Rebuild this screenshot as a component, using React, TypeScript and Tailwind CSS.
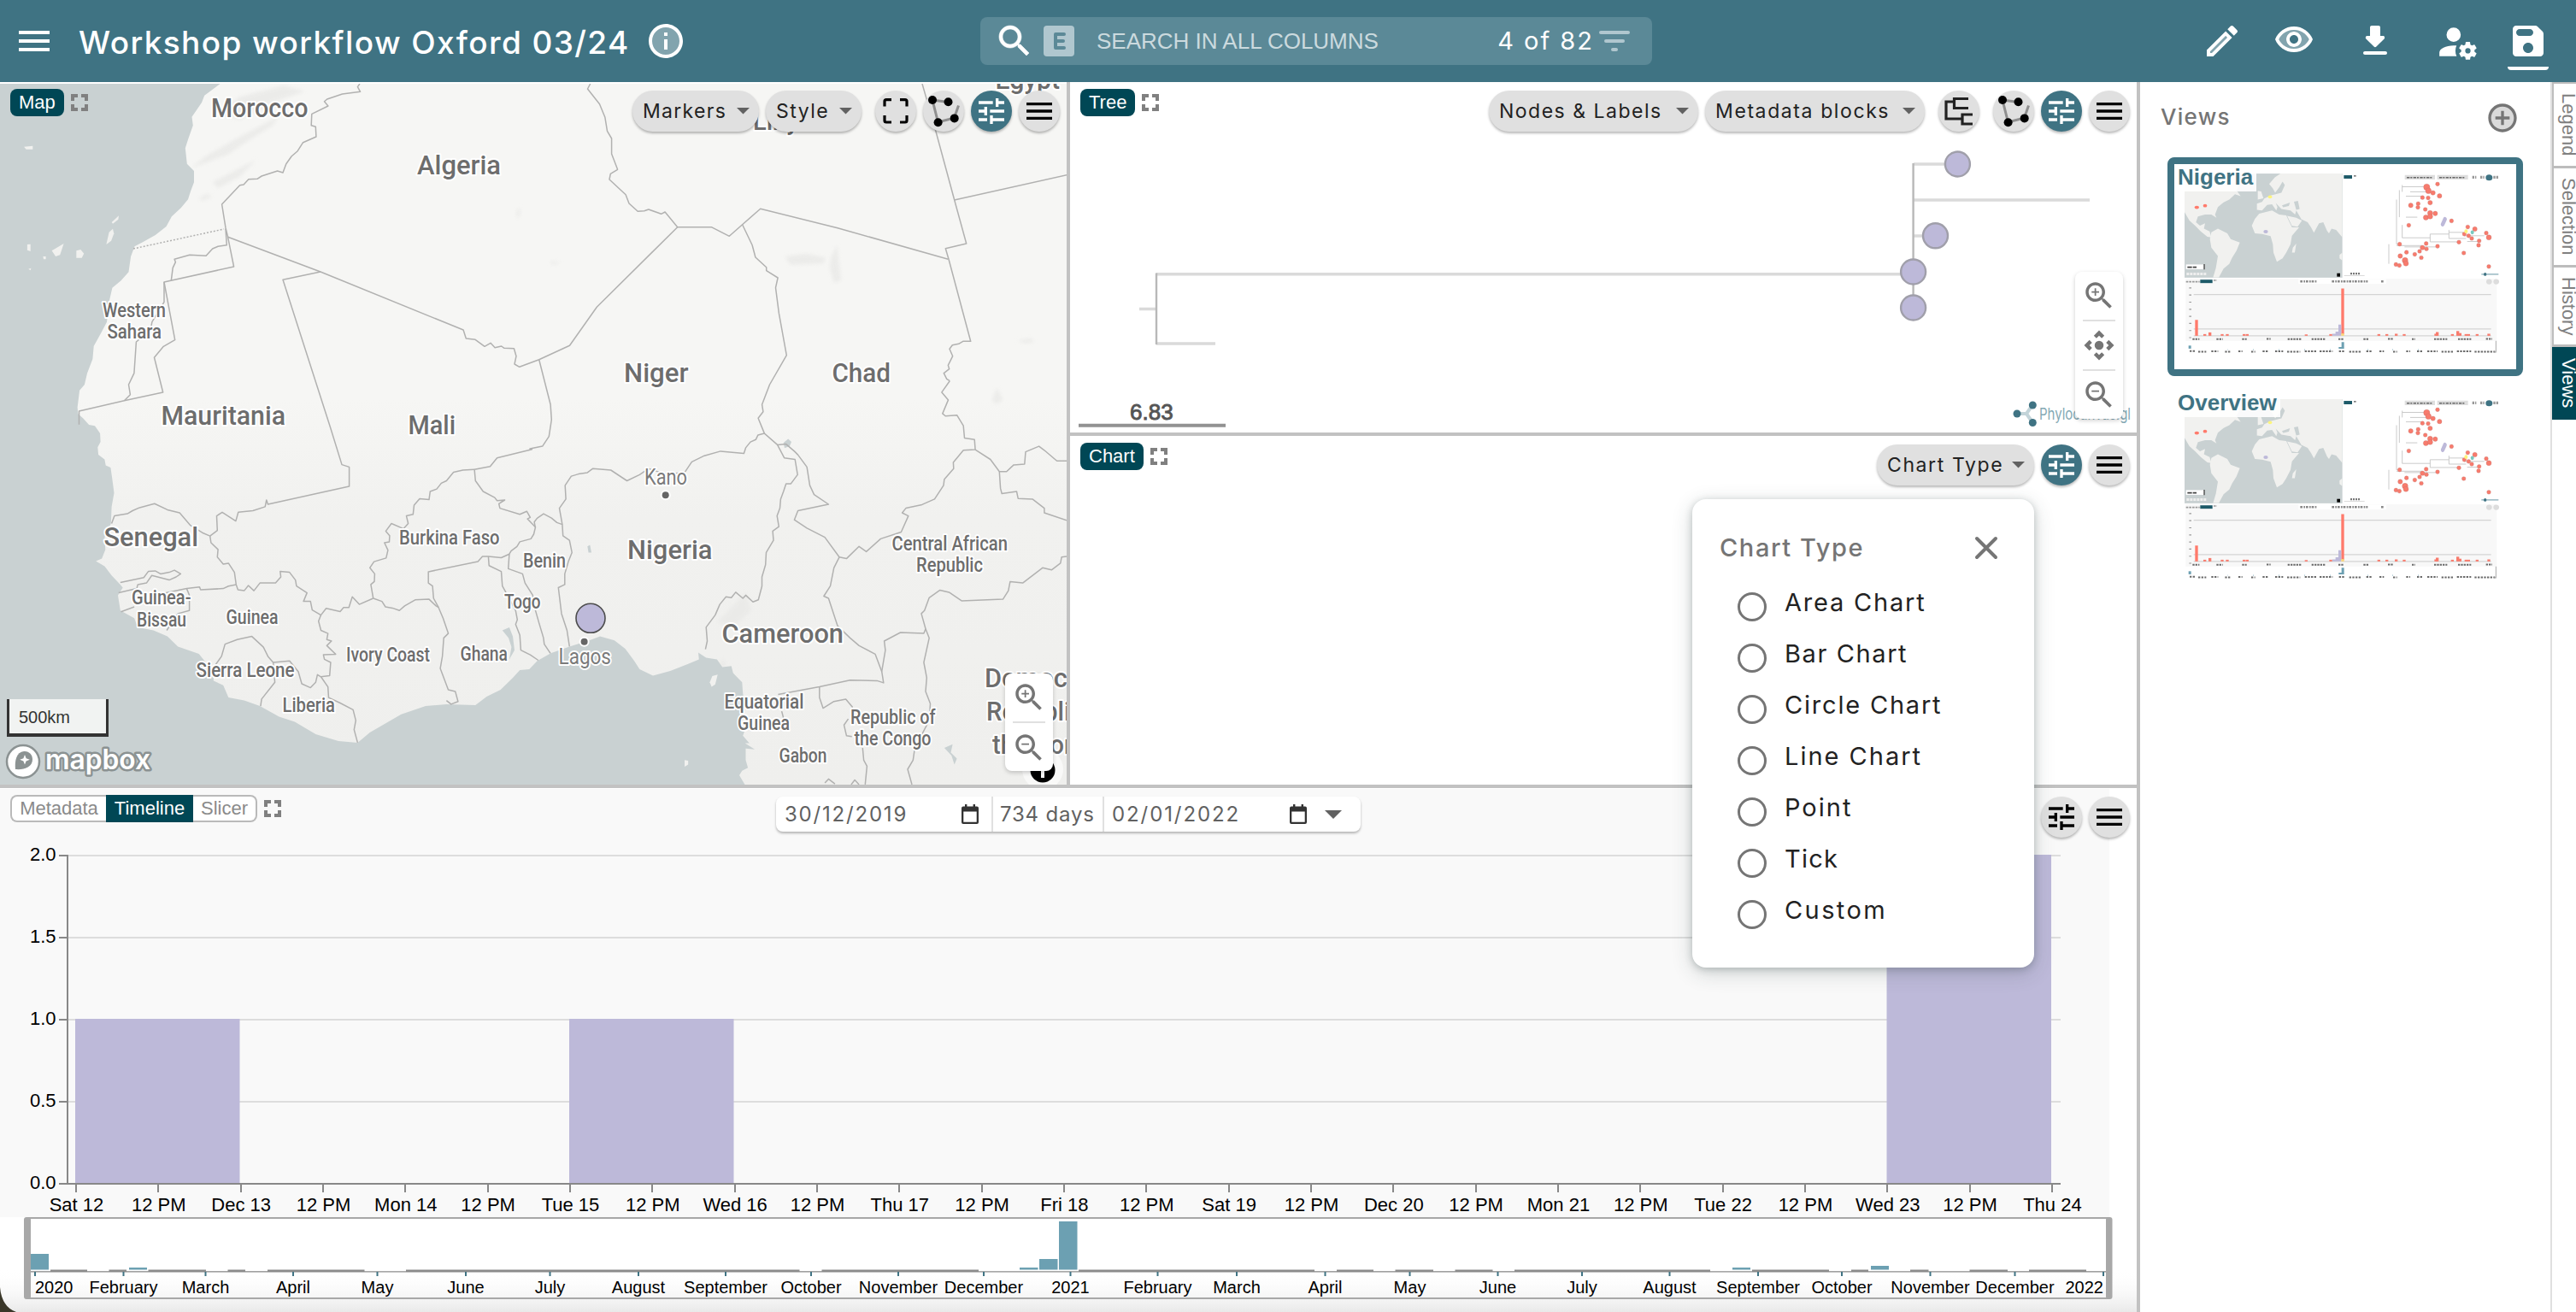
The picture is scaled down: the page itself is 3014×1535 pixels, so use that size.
import type { ReactNode } from "react";

const SANS = "font-['Inter','Open_Sans',sans-serif]";
const HELV = "font-['Liberation_Sans',Arial,sans-serif]";

/* ---------- icons ---------- */

function Icon({ size, className = "", children }: { size: number; className?: string; children: ReactNode }) {
  return (
    <svg width={size} height={size} viewBox="0 0 24 24" fill="currentColor" className={"shrink-0 block " + className}>
      {children}
    </svg>
  );
}

const MenuIcon = ({ size }: { size: number }) => (
  <Icon size={size}>
    <path d="M3 18h18v-2H3v2zm0-5h18v-2H3v2zm0-7v2h18V6H3z" />
  </Icon>
);

const InfoIcon = () => (
  <Icon size={48}>
    <circle cx="12" cy="12" r="9" opacity=".35" />
    <path d="M11 7h2v2h-2zm0 4h2v6h-2zm1-9C6.48 2 2 6.48 2 12s4.48 10 10 10 10-4.48 10-10S17.52 2 12 2zm0 18c-4.41 0-8-3.59-8-8s3.59-8 8-8 8 3.59 8 8-3.59 8-8 8z" />
  </Icon>
);

const SearchIcon = () => (
  <Icon size={48}>
    <path d="M15.5 14h-.79l-.28-.27C15.41 12.59 16 11.11 16 9.5 16 5.91 13.09 3 9.5 3S3 5.91 3 9.5 5.91 16 9.5 16c1.61 0 3.09-.59 4.23-1.57l.27.28v.79l5 4.99L20.49 19l-4.99-5zm-6 0C7.01 14 5 11.99 5 9.5S7.01 5 9.5 5 14 7.01 14 9.5 11.99 14 9.5 14z" stroke="currentColor" strokeWidth=".3" />
  </Icon>
);

const TuneIcon = () => (
  <svg width="40" height="40" viewBox="0 0 24 24" fill="none" stroke="currentColor" strokeWidth="2" strokeLinecap="butt" className="block">
    <path d="M3 6h10M17 6h4M3 12h6M11 12h10M3 18h6M13 18h8M16 3v6M8 9v6M12 15v6" />
  </svg>
);

const LassoIcon = () => (
  <svg width="48" height="48" viewBox="0 0 48 48" className="block">
    <path d="M41.5 17.5 36.5 32 17.5 37 11 11l18.5 2.5" fill="none" stroke="#8f8f8f" strokeWidth="3" />
    <g fill="#000">
      <circle cx="11" cy="11" r="5" />
      <circle cx="29.5" cy="13.3" r="5" />
      <circle cx="36.7" cy="32.4" r="5" />
      <circle cx="17.6" cy="37.3" r="5" />
    </g>
  </svg>
);

const FrameIcon = () => (
  <svg width="48" height="48" viewBox="0 0 48 48" fill="none" stroke="#000" strokeWidth="3.2" className="block">
    <path d="M19 10.6h-6a2 2 0 0 0-2 2v6M29 10.6h6a2 2 0 0 1 2 2v6M37 29v6a2 2 0 0 1-2 2h-6M11 29v6a2 2 0 0 0 2 2h6" />
  </svg>
);

const TreeIcon = () => (
  <svg width="48" height="48" viewBox="0 0 48 48" fill="none" stroke="#222" strokeWidth="3.2" className="block">
    <path d="M18.5 13H9v20h19M35 9.5H18.5v11H35M40 28H28v11h12" />
  </svg>
);

const ExpandIcon = () => (
  <svg width="20" height="20" viewBox="0 0 20 20" fill="none" stroke="#808080" strokeWidth="4" className="block shrink-0">
    <path d="M8 2H2v6M12 2h6v6M18 12v6h-6M2 12v6h6" />
  </svg>
);

const ZoomIcon = ({ plus }: { plus?: boolean }) => (
  <Icon size={42}>
    <path d="M15.5 14h-.79l-.28-.27C15.41 12.59 16 11.11 16 9.5 16 5.91 13.09 3 9.5 3S3 5.91 3 9.5 5.91 16 9.5 16c1.61 0 3.09-.59 4.23-1.57l.27.28v.79l5 4.99L20.49 19l-4.99-5zm-6 0C7.01 14 5 11.99 5 9.5S7.01 5 9.5 5 14 7.01 14 9.5 11.99 14 9.5 14z" />
    <path d={plus ? "M12 10h-2v2H9v-2H7V9h2V7h1v2h2v1z" : "M7 9h5v1H7z"} />
  </Icon>
);

const Caret = ({ w = 15 }: { w?: number }) => (
  <svg width={w} height={w / 2} viewBox="0 0 10 5" className="block shrink-0">
    <path d="M0 0h10L5 5z" fill="#616161" />
  </svg>
);

const CalendarIcon = () => (
  <svg width="20" height="23" viewBox="0 0 20 23" className="block shrink-0">
    <path d="M4 0h2.4v2.5h7.2V0H16v2.5h2a2 2 0 0 1 2 2V21a2 2 0 0 1-2 2H2a2 2 0 0 1-2-2V4.500a2 2 0 0 1 2-2h2zM2.300 8.500v12.200h15.400V8.500z" fill="#333" fillRule="evenodd" />
  </svg>
);

/* ---------- shared controls ---------- */

const SHADOW = "shadow-[0_2px_3px_rgba(0,0,0,0.28)]";

function Pill({ label, className }: { label: string; className: string }) {
  return (
    <div className={`flex h-12 items-center justify-between rounded-full bg-[#e0e0e0] pl-[12px] pr-[11px] text-[23px] text-[#222] whitespace-nowrap ${SHADOW} ${SANS} ${className}`}>
      <span className="pt-px">{label}</span>
      <Caret />
    </div>
  );
}

function Round({ active, className = "", children }: { active?: boolean; className?: string; children: ReactNode }) {
  return (
    <div className={`flex size-12 shrink-0 items-center justify-center rounded-full ${SHADOW} ${active ? "bg-[#3f7383] text-white" : "bg-[#e0e0e0] text-black"} ${className}`}>
      {children}
    </div>
  );
}

function Badge({ label }: { label: string }) {
  return (
    <div className="absolute left-3 top-2 flex items-center gap-2">
      <div className={`flex h-8 items-center rounded-lg bg-[#004755] px-[10px] text-[22px] leading-none text-white ${HELV}`}>{label}</div>
      <ExpandIcon />
    </div>
  );
}

/* ---------- map ---------- */

type Sheet = [number, number, number, number];
const NW: Sheet = [0, 0, 1.568, 3];
const SW: Sheet = [0, 400, 2.45, 2.8];
const SE: Sheet = [620, 400, 2.3758, 2.8];
const NE: Sheet = [980, 150, 3, 3];

const place = ([ox, oy, sx, sy]: Sheet, pts: string) =>
  pts
    .split(" ")
    .map((p) => {
      const [x, y] = p.split(",").map(Number);
      return `${(ox + x / sx).toFixed(1)},${(oy + y / sy).toFixed(1)}`;
    })
    .join(" ");

const OCEAN = [
  place(NW, "408,288 375,335 370,360 352,410 354,440 345,490 340,520 343,575 356,600 356,640 350,670 345,700 332,730 315,760 305,795 285,825 262,850 247,865 240,900 236,955 222,985 206,1010 200,1060 196,1130 185,1170 172,1215 170,1260 160,1310 155,1350 146,1370 142,1430"),
  place(SW, "224,236 238,250 255,272 272,275 287,300 288,328 280,345 282,370 300,385 303,405 317,412 322,450 327,495 320,540 318,595 300,640 302,680 292,710 275,718 300,735 320,765 345,795 352,805 338,830 345,880 385,905 395,935 440,945 480,965 510,998 570,1022 590,1050 612,1085 612,1110 640,1125 655,1165 700,1175 745,1193 800,1228 845,1245 905,1285 970,1308 1025,1313 1060,1280 1150,1220 1220,1193 1280,1187 1363,1190 1395,1162 1435,1140 1470,1100 1490,1075 1517,1072 1540,1045"),
  place(SE, "58,1020 110,998 165,978 195,965 235,978 265,1005 290,1045 305,1072 342,1093 390,1078 440,1055 470,1040 468,1018 490,1035 520,1040 535,1065 560,1062 565,1085 590,1115 592,1150 597,1200 590,1240 600,1265 592,1290 610,1315 598,1315 625,1335 600,1332 600,1370 606,1395 590,1405 582,1420 600,1455"),
  "0,925 0,90",
].join(" ");

const ISLANDS = [
  place(NW, "44,515 60,512 60,524 48,524"),
  place(NW, "205,780 218,757 217,770 207,785"),
  place(NW, "196,850 200,815 207,803 209,820 204,845 195,858"),
  place(NW, "50,858 56,857 56,882 50,878"),
  place(NW, "95,880 117,855 110,895 102,900"),
  place(NW, "140,880 148,876 154,890 150,905 140,905"),
  place(NW, "79,900 84,900 84,910 80,910"),
  place(NW, "52,944 57,941 56,949"),
  place(SE, "507,1095 522,1090 515,1122 505,1130 500,1115"),
  place(SE, "430,1370 440,1372 440,1385 430,1392"),
];

const LAKES = [
  place(SE, "705,330 718,318 727,328 722,342 708,348"),
  place(SE, "160,670 167,665 171,690 163,690"),
  place(SE, "1152,1330 1175,1318 1170,1345 1187,1365 1180,1385 1172,1355"),
  place(SW, "1440,945 1460,935 1470,965 1475,1010 1460,1040 1466,1000 1458,970"),
];

const RELIEF = [
  place(NW, "350,590 380,545 440,480 500,420 520,380 500,440 450,500 420,540 380,570"),
  place(NW, "390,640 430,600 470,560 440,620 400,660"),
  place(NW, "400,400 440,340 520,300 560,320 500,360 440,420"),
  place(NW, "365,695 380,680 390,690 370,705"),
  place(NW, "1440,900 1480,890 1515,905 1510,925 1450,930"),
  place(NW, "1525,900 1536,860 1538,900 1543,985 1530,992 1522,940"),
  place(NW, "948,740 954,725 954,760 948,765"),
  place(NW, "1010,915 1030,922 1012,930"),
  place(NE, "630,745 680,738 690,750 660,755"),
  place(SE, "560,870 600,820 615,880 570,930 520,920"),
  place(SE, "525,1055 538,1038 545,1060 532,1070"),
  place(SE, "1285,190 1298,150 1315,190 1295,205"),
];

const BORDERS = [
  place(NW, "660,294 656,305 661,322 628,330 600,348 595,356 602,372 572,400 571,440 579,445 580,480 556,500 546,530 535,548 525,575 519,606 509,600 480,618 472,628 456,629 447,648 440,650 407,717 414,800 418,832 429,936 301,990 321,1193 300,1216 283,1255 299,1377 228,1406 145,1443 145,1490"),
  place(NW, "414,803 416,860 400,865 390,873 378,898 348,895 320,910 322,920 317,940 314,985"),
  place(NW, "301,990 301,1060 279,1130 276,1160 250,1200 246,1310 236,1350 239,1385 228,1406"),
  place(NW, "418,832 588,954 850,1158 855,1188 872,1192 889,1216 900,1204 908,1220 920,1215 925,1222 943,1223 947,1250 944,1278 953,1288 989,1262 1045,1213 1095,1078 1243,797"),
  place(NW, "588,954 519,982 606,1500") + " " + place(SW, "980,402 1001,410 1001,473 768,532 764,518 760,540 725,553 683,558 676,587 637,558 621,570 623,618 602,636"),
  place(NW, "1083,294 1078,312 1100,365 1110,412 1114,460 1122,486 1122,540 1133,595 1120,610 1118,630 1148,683 1154,714 1170,742 1182,740 1190,735 1213,751 1220,744 1243,797 1305,797 1338,829 1362,788 1395,733") + " " + place(NE, "0,350 388,460"),
  "1079,98 " + place(NE, "344,8 410,252 452,405 379,422 390,460 467,748 440,748 425,757 403,761 393,775 404,800 388,832 392,845 373,860 383,880 394,887"),
  place(NE, "410,252 805,164"),
  place(NW, "1362,788 1380,860 1386,903 1406,938 1406,950 1427,975 1423,1010 1429,1100 1443,1247 1412,1350 1398,1420 1400,1445 1391,1468") + " " + place(SE, "652,300"),
  place(NW, "989,1262 1010,1420") + " " + place(SE, "60,255 53,310 35,342 0,350") + " " + place(SW, "1525,352 1425,380 1405,408 1360,418"),
  place(SW, "1360,418 1327,420 1300,427 1280,455 1265,463 1252,482 1233,490 1230,517 1203,514 1187,535 1184,565 1165,570 1170,595 1157,612 1122,595 1106,620 1117,635 1116,655 1102,658 1112,682 1107,708 1072,720 1060,740 1074,760 1073,785 1063,795 1070,840"),
  place(SW, "1360,418 1363,455 1385,490 1418,510 1425,520 1447,518 1430,530 1433,545 1490,565 1510,555 1520,575 1512,580 1535,607 1530,630 1522,645 1490,655 1482,670 1465,685 1460,695 1437,707 1400,703 1383,703 1370,720 1228,753 1228,790 1240,800 1243,840 1257,870"),
  place(SW, "1070,840 1095,850 1105,868 1125,872 1145,880 1160,865 1190,845 1230,843 1250,865 1257,870 1270,905 1285,955 1272,970 1268,1030 1262,1070 1285,1140 1305,1145 1313,1178 1293,1187 1280,1175"),
  place(SW, "1400,703 1402,733 1437,752 1440,800 1450,820 1478,880 1483,910 1478,925 1490,960 1493,1010 1520,1025 1543,1043"),
  place(SW, "1460,695 1457,743 1498,760 1505,790 1527,830 1530,860 1545,920 1558,970") + " " + place(SE, "40,990 57,1020"),
  place(SE, "15,607 12,590 20,578 38,563 60,577 75,592 90,598 92,635 110,650 117,690 107,720 97,760 97,795 79,805 88,890 103,945 110,998"),
  place(SE, "90,598 82,545 100,515 98,470 115,440 135,433 160,428 175,415 225,420 270,455 305,435 330,415 375,433 430,428 450,393 485,373 530,358 595,365 600,347 613,328 628,320 634,305 652,300 688,337 707,380 737,385 744,435 725,465 712,465 705,490 697,515 695,545 687,570 692,605 675,620 677,650 657,690 655,730 645,770 645,800 635,845 620,852 600,830 592,840 572,820 560,838 545,835 528,860 515,895 490,935 493,980 488,1007"),
  place(SE, "688,337 712,335 735,358 745,370 770,410 778,470 790,500 830,532 745,553 735,583 770,610 820,640 860,705 880,710 915,670 935,687 975,645 1032,623 1052,570 1035,560 1045,545 1090,533 1125,515 1150,470 1152,450 1178,415 1177,395 1205,355 1238,353 1236,320 1208,315 1205,275 1187,240 1155,243 1147,235 1163,190 1145,165 1167,128"),
  place(SE, "1238,353 1280,385 1305,425 1308,480 1312,497 1353,490 1357,513 1397,515 1430,545 1430,560 1492,585"),
  place(SE, "1305,425 1325,425 1345,403 1375,400 1378,360 1415,342 1430,355 1465,390 1492,390"),
  place(SE, "860,705 845,740 835,800 817,833 830,840 855,930 890,970 915,995 960,1023 978,1080 983,1117 965,1110 890,1108 805,1130 690,1155"),
  place(SE, "978,1080 988,1010 985,980 1030,952 1095,955 1100,940 1088,890 1097,880 1110,838 1140,813 1165,820 1200,848 1315,843 1330,815 1335,785 1370,790 1425,740 1450,747 1475,725 1478,705 1492,703"),
  place(SE, "1100,940 1110,970 1095,1050 1103,1100 1100,1145 1113,1185 1110,1240 1070,1330 1065,1370 1050,1400 1062,1450"),
  place(SE, "805,1130 805,1165 815,1200 845,1178 878,1170 897,1197"),
  place(SE, "885,1235 873,1255 880,1290 895,1293"),
  place(SE, "925,1330 928,1370 937,1390 932,1450"),
  place(SE, "700,1210 705,1232"),
  place(SE, "820,1445 830,1432 848,1448"),
  place(SE, "893,1450 903,1435 915,1450"),
  place(SW, "320,595 328,570 365,563 380,553 400,543 443,530 480,550 515,560 545,600 580,625 602,636 605,658 625,680 623,705 640,728 655,725 672,755 677,795 682,812 700,815 712,798 728,815 745,790 790,790 805,770 803,752 830,755 847,780 850,800 880,822 870,850 890,850 895,878 920,895 935,873 975,883 985,870 1000,870 1010,835 1030,860 1070,840"),
  place(SW, "345,788 412,772 425,752 445,750 460,760 485,755 500,748 518,760 505,770 485,780 435,765 420,790 395,795 392,808 340,822"),
  place(SW, "465,825 535,808 572,803 575,812 640,808 655,800 677,795"),
  place(SW, "535,808 543,830 543,880 510,890 478,945"),
  place(SW, "347,884 385,868"),
  place(SW, "610,1070 635,1030 645,990 680,975 722,965 755,1000 768,1030 783,1050 788,1115 750,1170 747,1193"),
  place(SW, "783,1050 830,1045 855,1080 865,1120 890,1133 905,1115 910,1090 920,1097 940,1130 942,1165 975,1183 1012,1205 1020,1240 1015,1270 1025,1313"),
  place(SW, "920,895 913,915 920,945 940,955 937,975 950,980 937,995 962,1023 927,1025 930,1040 948,1050 945,1093 920,1097"),
];

const COUNTRY_LABELS: [string, number, number, number, number][] = [
  ["Morocco", 247, 360.5, 136.5, 31],
  ["Algeria", 488, 586, 204, 31],
  ["Libya", 881, 950, 152, 31],
  ["Egypt", 1164.5, 1240, 104, 31],
  ["Niger", 730, 805.5, 446.5, 31],
  ["Chad", 973.5, 1042, 447, 31],
  ["Mauritania", 188.5, 334, 497, 31],
  ["Mali", 477.5, 533, 508, 31],
  ["Senegal", 121.5, 232, 639, 31],
  ["Nigeria", 734, 833.5, 653.5, 31],
  ["Cameroon", 844.5, 987, 752, 31],
  ["Democratic", 1152, 1310, 803.5, 31],
  ["Republic of", 1154, 1302, 843, 31],
  ["the Congo", 1161, 1294, 882, 31],
  ["Western", 120, 194, 371, 24],
  ["Sahara", 125.5, 189, 396, 24],
  ["Burkina Faso", 467, 584.5, 637, 24],
  ["Guinea-", 154, 223.500, 707, 24],
  ["Bissau", 160, 218, 733, 24],
  ["Guinea", 264.5, 325.5, 730, 24],
  ["Sierra Leone", 229.5, 344.5, 792, 24],
  ["Ivory Coast", 405, 503, 773.5, 24],
  ["Ghana", 538.5, 594, 773, 24],
  ["Liberia", 330.5, 392, 833, 24],
  ["Togo", 590, 632.5, 712, 24],
  ["Benin", 612, 662, 663.5, 24],
  ["Central African", 1043.500, 1179, 644, 24],
  ["Republic", 1072, 1150, 669, 24],
  ["Equatorial", 847.5, 940.5, 828.5, 24],
  ["Guinea", 863, 924, 853.5, 24],
  ["Republic of", 995, 1094.5, 846.5, 24],
  ["the Congo", 999.5, 1089.500, 872, 24],
  ["Gabon", 911.5, 967.5, 891.5, 24],
];

const CITY_LABELS: [string, number, number, number][] = [
  ["Kano", 754, 804, 567],
  ["Lagos", 653.5, 715, 777],
];

function MapPanel() {
  return (
    <div className="relative h-[822px] w-[1248px] shrink-0 overflow-hidden border-t-2 border-white bg-[#f6f6f4]">
      <svg width="1248" height="820" viewBox="0 98 1248 820" className="block font-['Roboto',sans-serif]">
        <defs>
          <linearGradient id="land" x1="0" y1="0" x2="0" y2="1">
            <stop offset="0" stopColor="#f6f6f4" />
            <stop offset=".45" stopColor="#f6f6f4" />
            <stop offset=".62" stopColor="#f1f1ef" />
            <stop offset="1" stopColor="#efefed" />
          </linearGradient>
          <filter id="soft">
            <feGaussianBlur stdDeviation="2" />
          </filter>
        </defs>
        <rect y="96" width="1248" height="822" fill="url(#land)" />
        <g fill="#e9e9e7" filter="url(#soft)" opacity=".8">
          {RELIEF.map((p, i) => (
            <polygon key={i} points={p} />
          ))}
        </g>
        <polygon points={OCEAN} fill="#c9d1d2" />
        {ISLANDS.map((p, i) => (
          <polygon key={i} points={p} fill="#f1f1ef" />
        ))}
        {LAKES.map((p, i) => (
          <polygon key={i} points={p} fill="#c9d1d2" />
        ))}
        <g fill="none" stroke="#b1b1b0" strokeWidth="1.500" strokeLinejoin="round">
          {BORDERS.map((p, i) => (
            <polyline key={i} points={p} />
          ))}
          <polyline points="156,291 262,268" strokeDasharray="2 2" />
        </g>
        <g stroke="#fff" strokeWidth="4" strokeLinejoin="round" paintOrder="stroke">
          {COUNTRY_LABELS.map(([t, x0, x1, y, s], i) => (
            <text key={i} x={x0} y={y} fontSize={s} textLength={x1 - x0} lengthAdjust="spacingAndGlyphs" fontWeight="500" fill="#6d6d6d">
              {t}
            </text>
          ))}
          {CITY_LABELS.map(([t, x0, x1, y]) => (
            <text key={t} x={x0} y={y} fontSize="25" textLength={x1 - x0} lengthAdjust="spacingAndGlyphs" fill="#7b7b7b">
              {t}
            </text>
          ))}
          <circle cx="778.7" cy="579.3" r="4" fill="#666" />
          <circle cx="683.6" cy="750.7" r="4" fill="#666" />
        </g>
        <circle cx="691" cy="723.3" r="17" fill="#bdb9d9" stroke="#4d4d4d" strokeWidth="1.600" />
        <g>
          <circle cx="27" cy="891" r="19" fill="#fff" stroke="#8b9292" strokeWidth="2.500" />
          <path d="M18 900c-1-10 1-20 10-21 6-.5 10 4 10 9.500 0 9-10 12.500-20 11.500z" fill="#8b9292" />
          <path d="M29 883l1.600 4.200 4.200 1.600-4.200 1.600L29 894.600l-1.600-4.200-4.200-1.600 4.200-1.600z" fill="#fff" />
          <text x="53" y="900" fontSize="32" fontWeight="600" textLength="123" lengthAdjust="spacingAndGlyphs" fill="#fff" stroke="#8b9292" strokeWidth="5" strokeLinejoin="round" paintOrder="stroke" className="font-['Inter',sans-serif]">
            mapbox
          </text>
        </g>
        <circle cx="1220" cy="900" r="24" fill="#fff" opacity=".6" />
        <circle cx="1220" cy="901" r="14.500" fill="#000" />
        <path d="M1220 899v11" stroke="#fff" strokeWidth="4" />
      </svg>
      <div className={`absolute left-2 top-[720px] flex h-11 w-[119px] items-center border-x-[3px] border-b-4 border-[#333] bg-[#f1f3f2] pl-[11px] pt-px text-[20px] leading-none text-[#333] ${HELV}`}>500km</div>
      <div className="absolute -top-0.5 left-0">
        <Badge label="Map" />
      </div>
      <div className="absolute right-2 top-2 flex gap-2">
        <Pill label="Markers" className="w-[148px] tracking-[1.3px]" />
        <Pill label="Style" className="mr-2 w-[112px] tracking-[1.5px]" />
        <Round>
          <FrameIcon />
        </Round>
        <Round>
          <LassoIcon />
        </Round>
        <Round active>
          <TuneIcon />
        </Round>
        <Round>
          <MenuIcon size={40} />
        </Round>
      </div>
      <div className="absolute right-4 top-[690px] flex h-[114px] w-14 flex-col items-center rounded-lg bg-white pt-[7px] text-[#757575] shadow-[0_2px_5px_rgba(0,0,0,0.2)]">
        <ZoomIcon plus />
        <div className="mb-2 mt-[7px] h-0.5 w-[38px] bg-[#e0e0e0]" />
        <ZoomIcon />
      </div>
    </div>
  );
}

/* ---------- tree ---------- */

function TreePanel() {
  return (
    <div className="relative h-[410px] overflow-hidden bg-white">
      <svg width="1248" height="410" viewBox="1252 96 1248 410" className={`block ${HELV}`}>
        <g fill="none" stroke="#dadada" strokeWidth="3.600">
          <path d="M1333 361.500h20M1353 320.700h885M1353 402h69M2239 192h40M2239 234h206M2239 276h20" />
          <path d="M1353 319.500v83.500M2238.600 191v168" stroke="#b8b8b8" strokeWidth="2.400" />
        </g>
        <g fill="#bdb9d9" stroke="#a09faa" strokeWidth="2.400">
          <circle cx="2290.400" cy="192" r="14.500" />
          <circle cx="2264.500" cy="275.800" r="14.500" />
          <circle cx="2238.600" cy="318" r="14.500" />
          <circle cx="2238.600" cy="360" r="14.500" />
        </g>
        <text x="1322" y="491" fontSize="26" fill="#555" stroke="#555" strokeWidth=".9">6.83</text>
        <path d="M1262 497.800h172" stroke="#929292" strokeWidth="4" />
        <path d="M2360 484h11l7-10M2371 484l7 10" stroke="#c3d4d9" strokeWidth="4" fill="none" />
        <g fill="#3f7383">
          <circle cx="2360" cy="484" r="4.500" />
          <circle cx="2378.300" cy="474" r="4.500" />
          <circle cx="2378.300" cy="494.500" r="4.500" />
        </g>
        <text x="2386" y="491" fontSize="19" textLength="107" lengthAdjust="spacingAndGlyphs" fill="#84a9b4" className="font-['Inter',sans-serif]">
          Phylocanvas.gl
        </text>
      </svg>
      <Badge label="Tree" />
      <div className="absolute right-2 top-[10px] flex gap-2">
        <Pill label="Nodes & Labels" className="w-[245px] tracking-[1.5px]" />
        <Pill label="Metadata blocks" className="mr-2 w-[257px] tracking-[1.6px]" />
        <Round className="mr-2">
          <TreeIcon />
        </Round>
        <Round>
          <LassoIcon />
        </Round>
        <Round active>
          <TuneIcon />
        </Round>
        <Round>
          <MenuIcon size={40} />
        </Round>
      </div>
      <div className="absolute right-4 top-[222px] flex h-[172px] w-14 flex-col items-center rounded-lg bg-white pt-[7px] text-[#757575] shadow-[0_2px_5px_rgba(0,0,0,0.2)]">
        <ZoomIcon plus />
        <div className="mt-[7px] h-0.5 w-[38px] bg-[#e0e0e0]" />
        <svg width="42" height="42" viewBox="0 0 24 24" fill="currentColor" className="my-[7px] block">
          <path d="M5.540 8.460 2 12l3.540 3.540 1.760-1.770L5.540 12l1.760-1.770zM18.460 15.540 22 12l-3.540-3.540-1.760 1.770L18.460 12l-1.760 1.770zM8.460 18.460 12 22l3.540-3.540-1.770-1.760L12 18.460l-1.770-1.760zM15.540 5.540 12 2 8.460 5.540l1.770 1.760L12 5.540l1.770 1.760z" />
          <circle cx="12" cy="12" r="3" />
        </svg>
        <div className="mb-[7px] h-0.5 w-[38px] bg-[#e0e0e0]" />
        <ZoomIcon />
      </div>
    </div>
  );
}

/* ---------- chart ---------- */

const CHART_TYPES: [string, string][] = [
  ["Area Chart", "tracking-[1.8px]"],
  ["Bar Chart", "tracking-[1.6px]"],
  ["Circle Chart", "tracking-[1.8px]"],
  ["Line Chart", "tracking-[2px]"],
  ["Point", "tracking-[2px]"],
  ["Tick", "tracking-[1.2px]"],
  ["Custom", "tracking-[2.4px]"],
];

function ChartPanel() {
  return (
    <div className="relative h-[408px] bg-white">
      <Badge label="Chart" />
      <div className="absolute right-2 top-[10px] flex gap-2">
        <Pill label="Chart Type" className="w-[184px] tracking-[1.6px]" />
        <Round active>
          <TuneIcon />
        </Round>
        <Round>
          <MenuIcon size={40} />
        </Round>
      </div>
      <div className={`absolute right-[120px] top-[74px] z-10 h-[548px] w-[400px] rounded-2xl bg-white shadow-[0_6px_24px_rgba(40,60,60,0.2),0_2px_8px_rgba(40,60,60,0.25)] ${SANS}`}>
        <div className="flex items-center justify-between pl-8 pr-[42px] pt-9 text-[29px] leading-10 text-[#757575]">
          <span className="pt-px font-medium tracking-[1.6px]">Chart Type</span>
          <svg width="28" height="28" viewBox="0 0 28 28" stroke="#757575" strokeWidth="4" strokeLinecap="round" className="block">
            <path d="M3 3l22 22M25 3L3 25" />
          </svg>
        </div>
        <ul className="mt-[15px]">
          {CHART_TYPES.map(([t, tr]) => (
            <li key={t} className="flex h-[60px] items-center pl-[53px] text-[29px] leading-[60px] text-[#222]">
              <span className="mt-2 block size-[34px] rounded-full border-[3.500px] border-[#757575]" />
              <span className={`-mt-0.5 ml-[21px] ${tr}`}>{t}</span>
            </li>
          ))}
        </ul>
      </div>
    </div>
  );
}

/* ---------- timeline ---------- */

const DAY_TICKS = ["Sat 12", "12 PM", "Dec 13", "12 PM", "Mon 14", "12 PM", "Tue 15", "12 PM", "Wed 16", "12 PM", "Thu 17", "12 PM", "Fri 18", "12 PM", "Sat 19", "12 PM", "Dec 20", "12 PM", "Mon 21", "12 PM", "Tue 22", "12 PM", "Wed 23", "12 PM", "Thu 24"];

const MONTH_TICKS: [string, number][] = [
  ["February", 144.5], ["March", 240.5], ["April", 343], ["May", 441.5], ["June", 545], ["July", 643.5], ["August", 747], ["September", 849], ["October", 949], ["November", 1051], ["December", 1151], ["2021", 1252.5],
  ["February", 1354.5], ["March", 1447], ["April", 1550.5], ["May", 1649.5], ["June", 1752.5], ["July", 1851], ["August", 1953.5], ["September", 2057], ["October", 2155], ["November", 2258.5], ["December", 2357.5],
];

const GAPS: [number, number][] = [[36, 59], [102, 127.5], [148, 173.5], [241, 266.5], [287, 313], [426.5, 475], [935.5, 961.5], [1145, 1262], [1538, 1564], [1607, 1632.5], [1677, 1702.5], [1746.5, 1772], [2001, 2050], [2140, 2166], [2186, 2235], [2256.5, 2304.5], [2349, 2374], [2441, 2464]];

const BRUSH_BARS: [number, number, number][] = [
  [36, 21, 1467], [151, 21, 1483], [1193, 21.5, 1483], [1216, 21.5, 1473], [1239, 21.500, 1429], [2027, 21, 1483], [2189, 21, 1481],
];

function TimelinePanel() {
  return (
    <div className="relative h-[613px] bg-white">
      <svg width="2500" height="613" viewBox="0 922 2500 613" className={`block ${HELV}`}>
        <defs>
          <linearGradient id="fade" x1="0" y1="0" x2="0" y2="1">
            <stop offset="0" stopColor="#fff" stopOpacity="0" />
            <stop offset="1" stopColor="#e9e9e9" />
          </linearGradient>
        </defs>
        <rect y="923" width="2468" height="501" fill="#f9f9f9" />
        {[1001, 1097, 1193, 1289].map((y) => (
          <path key={y} d={`M80 ${y}H2411`} stroke="#dddddd" strokeWidth="2" />
        ))}
        <g fill="#bdb9d9">
          <rect x="88" y="1192" width="192.500" height="192" />
          <rect x="666" y="1192" width="192.500" height="192" />
          <rect x="2207.500" y="1000" width="192.500" height="384" />
        </g>
        <path d="M79 1000V1386M79 1385H2411" stroke="#888" strokeWidth="2" fill="none" />
        {["2.0", "1.5", "1.0", "0.5", "0.0"].map((t, i) => (
          <g key={t}>
            <path d={`M69 ${1001 + i * 96}h10`} stroke="#888" strokeWidth="2" />
            <text x="65.500" y={1007 + i * 96} textAnchor="end" fontSize="22">
              {t}
            </text>
          </g>
        ))}
        {DAY_TICKS.map((t, i) => (
          <g key={i}>
            <path d={`M${Math.round(89 + i * 96.33)} 1386v9`} stroke="#888" strokeWidth="2" />
            <text x={89.5 + i * 96.33} y="1417" textAnchor="middle" fontSize="22">
              {t}
            </text>
          </g>
        ))}
        <rect y="1424" width="2500" height="111" fill="#fff" />
        <rect y="1485" width="2500" height="50" fill="url(#fade)" />
        <path d="M36 1487H2464" stroke="#8b8b8b" strokeWidth="3" />
        {GAPS.map(([a, b]) => (
          <path key={a} d={`M${a} 1486H${b}`} stroke="#fff" strokeWidth="2.400" />
        ))}
        <g fill="#6ca0b2">
          {BRUSH_BARS.map(([x, w, y]) => (
            <rect key={x} x={x} y={y} width={w} height={1485.500 - y} />
          ))}
        </g>
        <path d="M41 1488v5M2461 1488v5" stroke="#3f7383" strokeWidth="2" />
        <text x="41" y="1513" fontSize="20">
          2020
        </text>
        <text x="2461" y="1513" fontSize="20" textAnchor="end">
          2022
        </text>
        {MONTH_TICKS.map(([t, x]) => (
          <g key={x}>
            <path d={`M${x} 1488v5`} stroke="#3f7383" strokeWidth="2" />
            <text x={x} y="1513" fontSize="20" textAnchor="middle">
              {t}
            </text>
          </g>
        ))}
        <path d="M32 1425H2468M32 1519H2468" stroke="#a8a8a8" strokeWidth="2" />
        <rect x="28" y="1424" width="8" height="96" rx="3" fill="#a8a8a8" />
        <rect x="2464" y="1424" width="7.500" height="96" rx="3" fill="#a8a8a8" />
        <path d="M0 1506q2 23 19 29H0z" fill="#3a3729" />
      </svg>
      <div className={`absolute left-3 top-2 flex items-center text-[22px] leading-none ${HELV}`}>
        <div className="flex h-8 w-[112px] items-center justify-center rounded-l-lg border-2 border-r-0 border-[#bababa] bg-white text-[#8a8a8a]">Metadata</div>
        <div className="flex h-8 w-[102px] items-center justify-center bg-[#004755] text-white">Timeline</div>
        <div className="mr-2 flex h-8 w-[75px] items-center justify-center rounded-r-lg border-2 border-l-0 border-[#bababa] bg-white text-[#8a8a8a]">Slicer</div>
        <ExpandIcon />
      </div>
      <div className={`absolute left-[908px] top-[10px] flex h-[41px] w-[684px] items-center rounded-lg bg-white text-[24px] text-[#616161] shadow-[0_2px_3px_rgba(0,0,0,0.28)] whitespace-nowrap ${SANS}`}>
        <div className="flex h-full w-[254px] items-center justify-between border-r-2 border-[#e0e0e0] pl-[10px] pr-[15px]">
          <span className="tracking-[1.8px]">30/12/2019</span>
          <CalendarIcon />
        </div>
        <div className="flex h-full w-[130px] items-center border-r-2 border-[#e0e0e0] pl-2 tracking-[0.8px]">734 days</div>
        <div className="flex h-full grow items-center justify-between pl-[9px] pr-[22px]">
          <span className="mr-auto tracking-[1.9px]">02/01/2022</span>
          <CalendarIcon />
          <span className="ml-[21px]">
            <Caret w={20} />
          </span>
        </div>
      </div>
      <div className="absolute right-2 top-[10px] flex gap-2">
        <Round>
          <TuneIcon />
        </Round>
        <Round>
          <MenuIcon size={40} />
        </Round>
      </div>
    </div>
  );
}

/* ---------- saved views ---------- */

const RED_DOTS: [number, number, number?][] = [
  [1056, 342], [1018, 351, 11], [1024, 362, 10], [1040, 368, 8], [1063, 377, 8], [1003, 382], [1023, 383], [1030, 397, 8], [962, 405, 8], [988, 400], [987, 411], [1013, 417, 7], [1030, 428, 9], [1048, 429, 8], [1015, 441, 9], [1030, 438, 9], [955, 464], [1105, 451, 7], [1162, 469, 7], [1187, 475, 8], [1150, 490], [1165, 495], [1176, 503], [1227, 487], [1236, 500, 9], [1202, 510], [1200, 523], [1131, 514], [1148, 546], [923, 520], [1016, 518], [1003, 530, 8], [1017, 534, 7], [993, 541], [1056, 526], [947, 544], [976, 550, 7], [999, 560], [925, 555, 8], [942, 568, 10], [910, 580], [922, 583], [945, 577, 9], [1236, 586, 7],
];

const RED_BARS: [number, number][] = [[234, 5], [252, 10], [295, 5], [313, 5], [372, 5], [383, 5], [590, 4], [676, 5], [845, 5], [873, 5], [906, 6], [934, 5], [1045, 6], [1050, 11], [1103, 5], [1122, 14], [1130, 8], [1151, 5], [1160, 5], [1190, 5], [1231, 6]];

function Thumbnail() {
  return (
    <svg width="400" height="240" viewBox="132 283 1200 607" preserveAspectRatio="none" className="block">
      <defs>
        <clipPath id="world">
          <rect x="168" y="311" width="554" height="308" />
        </clipPath>
      </defs>
      <rect x="132" y="283" width="1200" height="607" fill="#fff" />
      <rect x="168" y="311" width="554" height="308" fill="#c9d1d2" />
      <g fill="#f1f1ef" clipPath="url(#world)">
        <path d="M168 311H355L360 345 350 360 365 378 345 372 325 388 305 396 285 410 275 432 280 442 262 432 240 432 215 438 208 455 222 465 240 458 236 474 256 482 262 500 248 498 225 482 205 465 185 450 168 425z" />
        <path d="M262 485 285 474 318 488 330 505 362 515 350 540 335 560 325 578 305 592 288 619H268L278 590 285 555 262 530 257 505z" />
        <path d="M722 311H505L485 322 465 342 478 355 486 368 500 352 512 335 520 345 508 368 470 376 448 385 440 395 422 400 422 418 440 420 458 404 475 402 490 420 494 410 488 398 508 416 540 420 556 432 560 420 578 446 600 455 612 470 622 486 640 458 655 455 668 480 675 488 684 474 700 478 722 500z" />
        <path d="M430 430 475 420 500 432 525 435 545 470 570 470 545 495 540 520 525 545 512 562 492 572 480 545 478 520 470 496 440 490 415 488 404 465 415 445z" />
        <path d="M528 436 560 442 580 450 565 468 545 466zM548 530 560 518 555 545 545 545zM425 362l12 2 8 20-20 4zM722 545l-10 7v10l10 6z" />
      </g>
      <g fill="#c9d1d2">
        <path d="M510 405l28-8-4 10-20 4zM552 394l14-2 6 24-12 2z" />
      </g>
      <g fill="#ff7a6b">
        <ellipse cx="211" cy="411" rx="8" ry="5" />
        <ellipse cx="240" cy="406" rx="7" ry="5" />
      </g>
      <ellipse cx="468" cy="380" rx="7" ry="5" fill="#fdf57c" />
      <ellipse cx="453" cy="483" rx="8" ry="5" fill="#bdb9d9" />
      <rect x="173" y="580" width="64" height="14" fill="#fff" />
      <path d="M237 579v16M178 588h32" stroke="#444" strokeWidth="4" strokeDasharray="16 3" />
      <path d="M175 608h72" stroke="#eee" strokeWidth="8" strokeDasharray="9 3" />
      <rect x="703" y="606" width="11" height="10" fill="#000" />
      <rect x="727" y="316" width="29" height="10" fill="#1d5a68" />
      <path d="M762 318h8" stroke="#777" strokeWidth="4" />
      <path d="M941 322h106M1055 322h108" stroke="#dedede" strokeWidth="13" />
      <path d="M948 323h92M1062 323h90" stroke="#666" strokeWidth="4" strokeDasharray="10 3 6 4" />
      <path d="M1178 322h14M1206 322h14M1252 322h18" stroke="#999" strokeWidth="8" strokeDasharray="7 3" />
      <ellipse cx="1237" cy="323" rx="12" ry="9" fill="#3f7383" />
      <g fill="none" stroke="#c6c6c6" strokeWidth="2.500">
        <path d="M885 520v58M912 388v132M912 520h14M922 360v80M932 345v20M932 350h80M960 365h60M945 378h60M945 440h40M932 463v38h98M1030 490v23M1030 490h66M1096 478v25M1096 485h50M1030 513h100M1096 503h60M912 524h90M940 528h110M1150 495h70M1160 512h40" />
      </g>
      {RED_DOTS.map(([x, y, r = 7], i) => (
        <ellipse key={i} cx={x} cy={y} rx={r} ry={r * 0.85} fill="#f87b6d" stroke="#b8716a" strokeWidth=".8" />
      ))}
      <path d="M1082 446l-8 15" stroke="#bdb9d9" strokeWidth="13" strokeLinecap="round" />
      <circle cx="1156" cy="482" r="6" fill="#fdf57c" />
      <circle cx="1178" cy="485" r="6" fill="#79c9c0" />
      <path d="M728 613h72" stroke="#ccc" strokeWidth="2" />
      <path d="M750 607h34" stroke="#777" strokeWidth="6" strokeDasharray="6 3" />
      <path d="M1210 609h60" stroke="#7ba5b1" strokeWidth="3" />
      <circle cx="1223" cy="609" r="5" fill="#3f7383" />
      <rect x="172" y="622" width="1092" height="184" fill="#f8f8f8" />
      <path d="M173 631h48M270 627h12" stroke="#999" strokeWidth="4" strokeDasharray="8 3" />
      <rect x="223" y="625" width="43" height="10" fill="#1d5a68" />
      <rect x="568" y="623" width="308" height="14" fill="#fff" />
      <path d="M574 630h60M685 630h126M858 630h12" stroke="#888" strokeWidth="6" strokeDasharray="8 4 5 3" />
      <ellipse cx="1237" cy="631" rx="10" ry="8" fill="#ddd" />
      <ellipse cx="1262" cy="631" rx="10" ry="8" fill="#ddd" />
      <path d="M200 669H1244M200 771H1244M200 791H1244" stroke="#d4d4d4" strokeWidth="3" />
      <path d="M188 648v150" stroke="#999" strokeWidth="8" strokeDasharray="3 18" />
      <rect x="205" y="744" width="10" height="47" fill="#ff7a6b" />
      <rect x="718" y="651" width="10" height="136" fill="#ff7a6b" />
      <path d="M686 791v-6h12v-6h10v-21h10v33z" fill="#bdb9d9" />
      <rect x="718" y="784" width="10" height="7" fill="#fbd77a" />
      {RED_BARS.map(([x, h]) => (
        <rect key={x} x={x} y={791 - h} width="10" height={h} fill="#f87b6d" />
      ))}
      <g stroke="#6a6a6a" strokeWidth="5">
        <path d="M196 801h24M280 801h22M370 801h16M456 800h14M530 801h48M614 801h48M708 801h20M796 801h18M882 800h20M966 801h12M1044 801h46M1128 801h46M1226 800h22" strokeDasharray="7 3" />
        <path d="M186 836h20M216 838h28M262 837h24M310 838h20M357 837h14M402 838h14M442 837h18M486 837h28M528 838h46M590 837h40M642 837h46M710 837h18M746 838h40M806 837h22M852 837h16M900 838h14M946 837h14M984 837h18M1020 837h36M1070 838h40M1124 837h50M1186 838h72" strokeDasharray="7 4" />
      </g>
      <rect x="182" y="820" width="9" height="9" fill="#6ca0b2" />
      <path d="M709 829v-5h10v-14h9v19z" fill="#6ca0b2" />
      <path d="M320 832h1M409 832h2M498 832h2M588 832h2M678 832h2M810 832h2M898 832h2M988 832h2" stroke="#6ca0b2" strokeWidth="3" />
      <path d="M1261 806v33h-6" stroke="#aaa" strokeWidth="3" fill="none" />
    </svg>
  );
}

function ViewCard({ name, selected }: { name: string; selected?: boolean }) {
  return (
    <div className={`relative h-64 w-[416px] overflow-hidden rounded-lg border-8 ${selected ? "border-[#3f7383]" : "border-white"}`}>
      <Thumbnail />
      <div className={`absolute left-0 top-0 h-8 bg-white/90 pl-1 pr-1 text-[26px] font-bold leading-[30px] text-[#3f7383] ${HELV}`}>{name}</div>
    </div>
  );
}

const SIDE_TABS: [string, string][] = [
  ["Legend", "h-[101px] border-t-2"],
  ["Selection", "h-[116px]"],
  ["History", "h-[93px]"],
];

function Sidebar() {
  return (
    <div className="flex grow bg-white">
      <div className="w-[480px] shrink-0">
        <div className={`flex h-[84px] items-center justify-between pl-6 pr-9 text-[26px] font-medium text-[#757575] ${SANS}`}>
          <span className="-mt-1 tracking-[1.3px]">Views</span>
          <Icon size={40}>
            <circle cx="12" cy="12" r="9" fill="#dadada" />
            <path d="M13 7h-2v4H7v2h4v4h2v-4h4v-2h-4V7zm-1-5C6.480 2 2 6.480 2 12s4.480 10 10 10 10-4.480 10-10S17.520 2 12 2zm0 18c-4.410 0-8-3.590-8-8s3.590-8 8-8 8 3.590 8 8-3.590 8-8 8z" />
          </Icon>
        </div>
        <div className="flex flex-col gap-2 pl-8 pt-1">
          <ViewCard name="Nigeria" selected />
          <ViewCard name="Overview" />
        </div>
      </div>
      <div className={`grow border-l-2 border-[#e0e0e0] text-[22px] leading-none text-[#808080] ${HELV}`}>
        {SIDE_TABS.map(([t, h]) => (
          <div key={t} className={`flex items-center justify-center border-b-[3px] border-l-2 border-[#bdbdbd] pl-1.5 ${h}`}>
            <span className="[writing-mode:vertical-rl]">{t}</span>
          </div>
        ))}
        <div className="flex h-[85px] items-center justify-center bg-[#004755] pl-2 text-white">
          <span className="[writing-mode:vertical-rl]">Views</span>
        </div>
      </div>
    </div>
  );
}

/* ---------- header ---------- */

function Header() {
  return (
    <header className="flex h-24 items-center bg-[#3f7383] text-white">
      <div className="ml-4">
        <MenuIcon size={48} />
      </div>
      <h1 className={`ml-[28px] w-[663px] whitespace-nowrap pt-1 text-[37px] font-medium tracking-[1.4px] ${SANS}`}>Workshop workflow Oxford 03/24</h1>
      <InfoIcon />
      <div className="ml-[344px] flex h-14 w-[786px] items-center rounded-lg bg-[#5b8997] pl-[16px]">
        <SearchIcon />
        <svg width="48" height="48" viewBox="0 0 24 24" className="ml-[4px] block">
          <rect x="3" y="3" width="18" height="18" rx="2" fill="#b0c7cf" />
          <path d="M15 8h-5v8h5M10 12h4.500" fill="none" stroke="#5b8997" strokeWidth="2" strokeLinecap="round" strokeLinejoin="round" />
        </svg>
        <span className={`ml-5 whitespace-nowrap text-[26px] text-white/70 ${HELV}`}>SEARCH IN ALL COLUMNS</span>
        <span className={`ml-auto whitespace-nowrap text-[29px] tracking-[2px] ${SANS}`}>4 of 82</span>
        <svg width="48" height="48" viewBox="0 0 24 24" className="mr-5 block" stroke="#b0c7cf" strokeWidth="2" strokeLinecap="round">
          <path d="M4 7h16M7 12h10M11 17h2" />
        </svg>
      </div>
      <div className="ml-auto flex items-center pr-8">
        <Icon size={48}>
          <path d="M5 18.080V19h.920l9.060-9.060-.920-.920z" opacity=".35" />
          <path d="M20.710 7.040c.390-.390.390-1.020 0-1.410l-2.340-2.340c-.200-.200-.450-.290-.710-.290s-.510.100-.700.290l-1.830 1.830 3.750 3.750 1.830-1.830zM3 17.250V21h3.750L17.810 9.940l-3.750-3.750L3 17.250zM5.920 19H5v-.920l9.060-9.060.920.920L5.920 19z" />
        </Icon>
        <Icon size={48} className="-mt-0.5 ml-9">
          <path d="M12 6c-3.790 0-7.170 2.130-8.820 5.500C4.830 14.870 8.210 17 12 17s7.170-2.130 8.820-5.500C19.170 8.130 15.790 6 12 6zm0 10c-2.480 0-4.500-2.020-4.500-4.500S9.520 7 12 7s4.500 2.020 4.500 4.500S14.480 16 12 16z" opacity=".35" />
          <path d="M12 4C7 4 2.730 7.110 1 11.500 2.730 15.890 7 19 12 19s9.270-3.110 11-7.500C21.270 7.110 17 4 12 4zm0 13c-3.790 0-7.170-2.130-8.820-5.500C4.830 8.130 8.210 6 12 6s7.170 2.130 8.820 5.500C19.170 14.870 15.790 17 12 17zm0-10c-2.480 0-4.500 2.020-4.500 4.500S9.520 16 12 16s4.500-2.020 4.500-4.500S14.480 7 12 7zm0 7c-1.380 0-2.500-1.120-2.500-2.500S10.620 9 12 9s2.500 1.120 2.500 2.500S13.380 14 12 14z" />
        </Icon>
        <Icon size={48} className="ml-[47px]">
          <path d="M16.590 9H15V4c0-.550-.450-1-1-1h-4c-.550 0-1 .450-1 1v5H7.410c-.890 0-1.340 1.080-.710 1.710l4.590 4.590c.390.390 1.020.390 1.410 0l4.590-4.590c.630-.630.190-1.710-.700-1.710zM5 19c0 .550.450 1 1 1h12c.550 0 1-.450 1-1s-.450-1-1-1H6c-.550 0-1 .450-1 1z" />
        </Icon>
        <Icon size={50} className="ml-[47px] mt-0.5">
          <path d="M10 4a4 4 0 1 0 0 8 4 4 0 0 0 0-8M17 12c-.13 0-.24.09-.26.21l-.19 1.320c-.3.130-.59.290-.85.470l-1.240-.5c-.110 0-.240 0-.310.130l-1 1.730c-.06.110-.04.240.06.320l1.060.820a4.200 4.200 0 0 0 0 1l-1.060.820c-.09.080-.12.210-.06.320l1 1.730c.06.130.190.130.310.130l1.240-.5c.26.180.54.350.85.470l.190 1.320c.02.120.12.210.260.210h2c.110 0 .220-.09.240-.21l.190-1.320c.3-.13.570-.29.840-.47l1.230.5c.130 0 .260 0 .330-.13l1-1.730c.06-.11.030-.24-.06-.32l-1.070-.82a4.200 4.200 0 0 0 0-1l1.060-.82c.09-.08.120-.21.060-.32l-1-1.730c-.06-.13-.190-.13-.320-.13l-1.230.5c-.27-.18-.540-.350-.850-.470l-.190-1.320c-.010-.120-.120-.210-.230-.210h-2M10 14c-4.420 0-8 1.790-8 4v2h9.680A7 7 0 0 1 11 17a7 7 0 0 1 .64-2.910c-.53-.06-1.080-.09-1.640-.09M18 15.500a1.500 1.500 0 1 1 0 3 1.500 1.500 0 0 1 0-3z" />
        </Icon>
        <div className="relative ml-[34px]">
          <Icon size={48}>
            <path d="M17.590 3.590c-.380-.380-.890-.590-1.420-.590H5c-1.110 0-2 .900-2 2v14c0 1.100.900 2 2 2h14c1.100 0 2-.900 2-2V7.830c0-.530-.210-1.040-.590-1.410l-2.820-2.830zM12 19c-1.660 0-3-1.340-3-3s1.340-3 3-3 3 1.340 3 3-1.340 3-3 3zm1-10H7c-1.100 0-2-.900-2-2s.900-2 2-2h6c1.100 0 2 .900 2 2s-.900 2-2 2z" />
          </Icon>
          <div className="absolute left-0 top-[54px] h-1 w-12 rounded-b-sm bg-white" />
        </div>
      </div>
    </header>
  );
}

export default function App() {
  return (
    <div className="h-[1535px] w-[3014px] overflow-hidden bg-white">
      <Header />
      <div className="flex h-[1439px]">
        <div className="w-[2500px] shrink-0">
          <div className="flex border-b-4 border-[#c2c2c2]">
            <MapPanel />
            <div className="w-[1252px] border-l-4 border-[#c2c2c2]">
              <TreePanel />
              <div className="h-1 bg-[#c2c2c2]" />
              <ChartPanel />
            </div>
          </div>
          <TimelinePanel />
        </div>
        <div className="w-1 shrink-0 bg-[#c2c2c2]" />
        <Sidebar />
      </div>
    </div>
  );
}
